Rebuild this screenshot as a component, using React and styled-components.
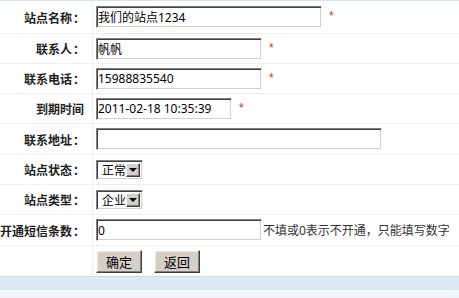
import React from "react";
import styled, { createGlobalStyle } from "styled-components";

const GlobalStyle = createGlobalStyle`
  html, body { margin: 0; padding: 0; background: #ffffff; }
  body {
    font-family: "Noto Sans", "Noto Sans CJK SC", sans-serif;
    font-size: 12px;
    color: #222;
  }
`;

const Page = styled.div`
  width: 459px;
  height: 298px;
  overflow: hidden;
  display: flex;
  flex-direction: column;
  background: #f0f7fa;
`;

const Form = styled.div`
  background: #fff;
  border-top: 1px solid #d3e6ee;
  display: flex;
  flex-direction: column;
`;

const Row = styled.div`
  display: grid;
  grid-template-columns: 93px 1fr;
  height: ${(p) => p.$h}px;
  box-sizing: border-box;
  border-bottom: ${(p) => (p.$last ? "none" : "1px solid #e8f0f4")};
`;

const Label = styled.div`
  box-sizing: border-box;
  border-right: 1px solid #e8f0f4;
  padding-right: 8px;
  display: flex;
  align-items: center;
  justify-content: flex-end;
  white-space: nowrap;
  font-family: "Noto Sans CJK SC", sans-serif;
  font-weight: bold;
  font-size: 12px;
  color: #1e1e1e;
`;

const Colon = styled.span`
  display: inline-block;
  width: 12px;
  text-align: left;
  padding-left: 1px;
  box-sizing: border-box;
`;

const Field = styled.div`
  display: flex;
  align-items: center;
  padding-left: 3px;
  gap: ${(p) => p.$gap || 0}px;
  white-space: nowrap;
`;

const TextInput = styled.input`
  box-sizing: border-box;
  width: ${(p) => p.$w}px;
  height: 22px;
  margin: 0;
  padding: 0 1px;
  font-family: "Noto Sans", "Noto Sans CJK SC", sans-serif;
  font-size: 12px;
  color: #000;
  background: #fff;
  border-style: solid;
  border-width: 1px;
  border-color: #808080 #ffffff #ffffff #808080;
  box-shadow: inset 1px 1px 0 #404040, inset -1px -1px 0 #d4d0c8;
  outline: none;
`;

const Star = styled.span`
  color: #d42a2a;
  font-family: "Liberation Sans", sans-serif;
  font-size: 12px;
  margin-left: 7px;
  position: relative;
  top: -1px;
`;

const Hint = styled.span`
  color: #333;
  font-size: 12px;
  margin-left: 1px;
  font-family: "Noto Sans", "Noto Sans CJK SC", sans-serif;
`;

const Select = styled.div`
  box-sizing: border-box;
  width: 47px;
  height: 20px;
  display: flex;
  align-items: stretch;
  background: #fff;
  border-style: solid;
  border-width: 1px;
  border-color: #808080 #ffffff #ffffff #808080;
  box-shadow: inset 1px 1px 0 #404040, inset -1px -1px 0 #d4d0c8;
  padding: 2px;
`;

const SelectText = styled.span`
  flex: 1;
  display: flex;
  align-items: center;
  padding-left: 3px;
  font-family: "Noto Sans CJK SC", sans-serif;
  font-size: 12px;
  color: #000;
`;

const ArrowBox = styled.span`
  box-sizing: border-box;
  width: 15px;
  display: flex;
  align-items: center;
  justify-content: center;
  background: #d4d0c8;
  border-style: solid;
  border-width: 1px;
  border-color: #ffffff #404040 #404040 #ffffff;
  box-shadow: inset -1px -1px 0 #808080;
  &::after {
    content: "";
    width: 0;
    height: 0;
    border-left: 4px solid transparent;
    border-right: 4px solid transparent;
    border-top: 4px solid #000;
    margin-top: 1px;
  }
`;

const Button = styled.button`
  box-sizing: border-box;
  width: 46px;
  height: 23px;
  margin: 0;
  padding: 0;
  font-family: "Noto Sans CJK SC", sans-serif;
  font-size: 13px;
  color: #000;
  background: #d4d0c8;
  border-style: solid;
  border-width: 1px;
  border-color: #ffffff #404040 #404040 #ffffff;
  box-shadow: inset -1px -1px 0 #808080, inset 1px 1px 0 #ece9e2;
  cursor: pointer;
`;

const FooterBar = styled.div`
  height: 12px;
  background: #dcebf1;
  border-top: 1px solid #c6dde6;
  border-bottom: 1px solid #d0e4ec;
`;

function FakeSelect({ value }) {
  return (
    <Select>
      <SelectText>{value}</SelectText>
      <ArrowBox />
    </Select>
  );
}

function FieldLabel({ text, colon = true }) {
  return (
    <Label>
      {text}
      {colon && <Colon>：</Colon>}
    </Label>
  );
}

export default function App() {
  return (
    <>
      <GlobalStyle />
      <Page>
        <Form>
          <Row $h={33}>
            <FieldLabel text="站点名称" />
            <Field>
              <TextInput $w={226} defaultValue="我们的站点1234" />
              <Star>*</Star>
            </Field>
          </Row>
          <Row $h={30}>
            <FieldLabel text="联系人" />
            <Field>
              <TextInput $w={166} defaultValue="帆帆" />
              <Star>*</Star>
            </Field>
          </Row>
          <Row $h={30}>
            <FieldLabel text="联系电话" />
            <Field>
              <TextInput $w={166} defaultValue="15988835540" />
              <Star>*</Star>
            </Field>
          </Row>
          <Row $h={30}>
            <FieldLabel text="到期时间" colon={false} />
            <Field>
              <TextInput $w={136} defaultValue="2011-02-18 10:35:39" />
              <Star>*</Star>
            </Field>
          </Row>
          <Row $h={31}>
            <FieldLabel text="联系地址" />
            <Field>
              <TextInput $w={286} defaultValue="" />
            </Field>
          </Row>
          <Row $h={30}>
            <FieldLabel text="站点状态" />
            <Field>
              <FakeSelect value="正常" />
            </Field>
          </Row>
          <Row $h={30}>
            <FieldLabel text="站点类型" />
            <Field>
              <FakeSelect value="企业" />
            </Field>
          </Row>
          <Row $h={31}>
            <FieldLabel text="开通短信条数" />
            <Field>
              <TextInput $w={166} defaultValue="0" />
              <Hint>不填或0表示不开通，只能填写数字</Hint>
            </Field>
          </Row>
          <Row $h={30} $last>
            <Label />
            <Field $gap={12}>
              <Button>确定</Button>
              <Button>返回</Button>
            </Field>
          </Row>
        </Form>
        <FooterBar />
      </Page>
    </>
  );
}
